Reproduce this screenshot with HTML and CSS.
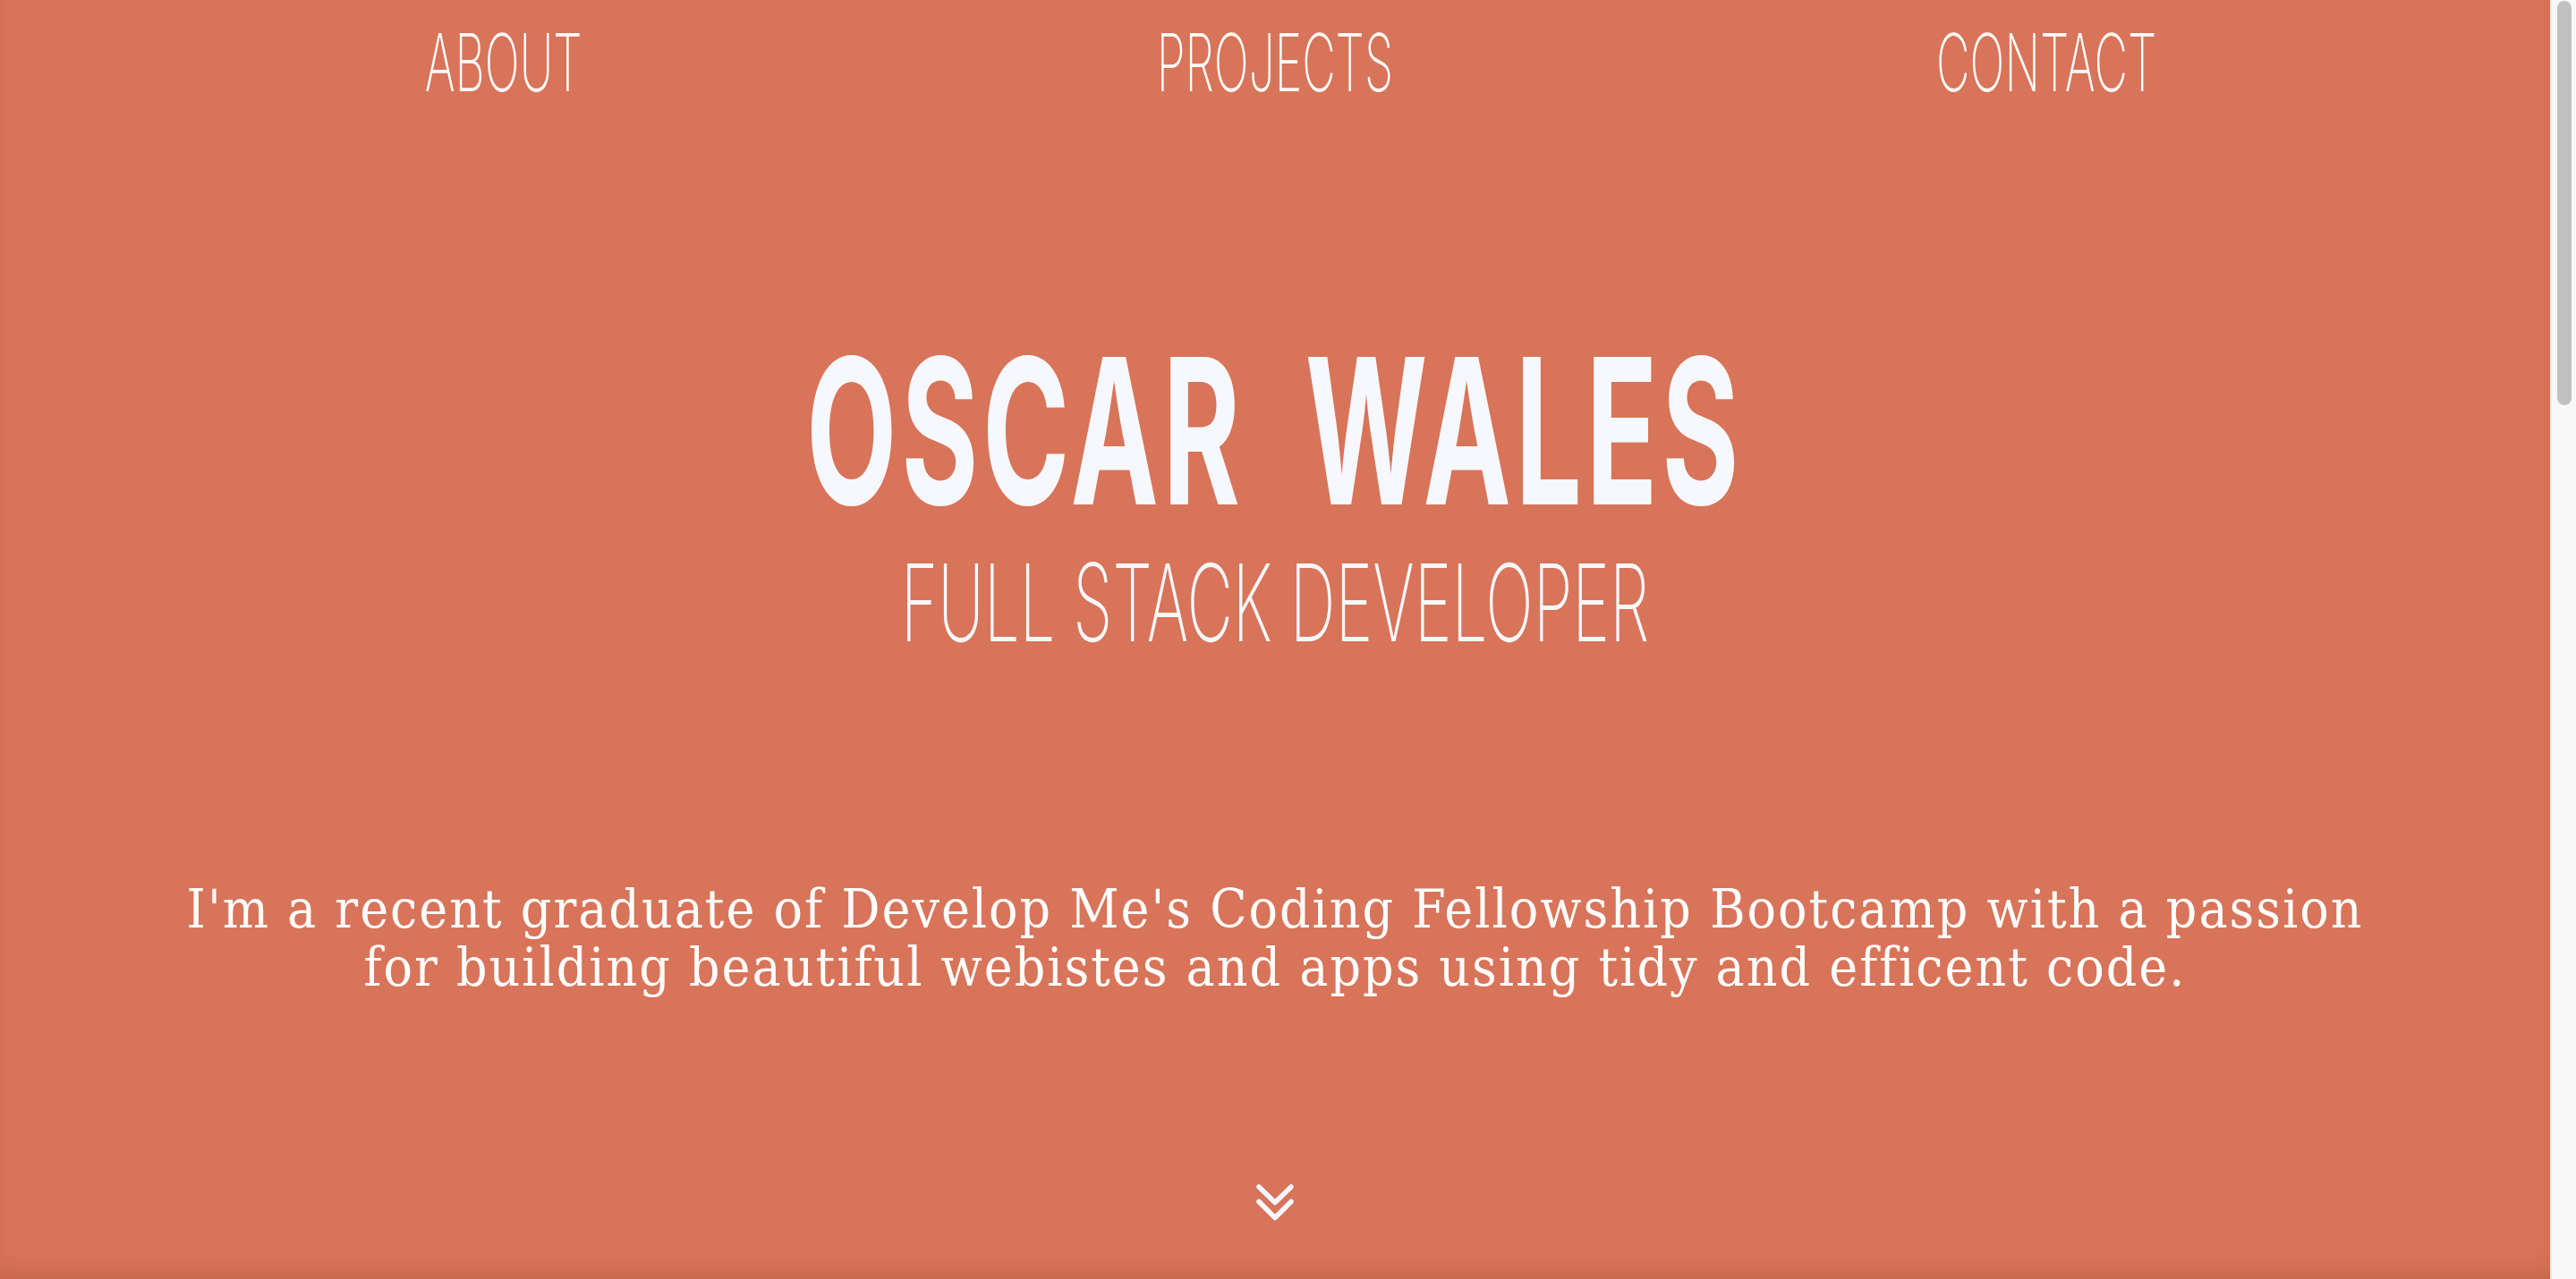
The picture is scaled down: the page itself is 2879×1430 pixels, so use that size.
FILE: index.html
```html
<!DOCTYPE html>
<html lang="en">
<head>
<meta charset="utf-8">
<title>Oscar Wales — Full Stack Developer</title>
<link rel="stylesheet" href="styles.css">
</head>
<body>
<div class="page">
  <main class="hero">
    <nav class="nav">
      <a class="nav-item" href="#about"><span class="squeeze">About</span></a>
      <a class="nav-item" href="#projects"><span class="squeeze">Projects</span></a>
      <a class="nav-item" href="#contact"><span class="squeeze">Contact</span></a>
    </nav>
    <header class="intro">
      <h1 class="name"><span class="squeeze">Oscar Wales</span></h1>
      <h2 class="role"><span class="squeeze">Full Stack Developer</span></h2>
    </header>
    <p class="bio">I'm a recent graduate of Develop Me's Coding Fellowship Bootcamp with a passion for building beautiful webistes and apps using tidy and efficent code.</p>
    <a class="scroll-down" href="#about" aria-label="Scroll down">
      <svg width="46" height="46" viewBox="0 0 46 46" fill="none" stroke="#f7f8fd" stroke-width="5.5" stroke-linecap="round" stroke-linejoin="round">
        <path d="M5 5 L23 22.5 L41 5"/>
        <path d="M5 21.5 L23 39.5 L41 21.5"/>
      </svg>
    </a>
  </main>
  <div class="scrollbar"><div class="scrollbar-thumb"></div></div>
</div>
</body>
</html>
```

FILE: styles.css
```css
* { box-sizing: border-box; }

html, body {
  margin: 0;
  padding: 0;
  height: 100%;
  overflow: hidden;
}

body {
  font-family: "Inter", "Roboto", "Liberation Sans", sans-serif;
  background: #f8f8f8;
}

.page {
  display: flex;
  height: 1430px;
}

.hero {
  flex: 1;
  display: flex;
  flex-direction: column;
  align-items: center;
  background: #d87459;
  box-shadow: inset 0 -18px 26px -14px rgba(120, 40, 20, 0.25);
}

.nav {
  width: 100%;
  display: flex;
  padding: 25px 132px 0;
}

.nav-item {
  flex: 1;
  text-align: center;
  color: #ffffff;
  text-decoration: none;
  text-transform: uppercase;
  font-size: 89px;
  font-weight: 200;
  line-height: 1;
}

.squeeze {
  display: inline-block;
  transform: scaleX(0.58);
  transform-origin: center;
  white-space: nowrap;
}

.intro {
  margin-top: 254px;
  text-align: center;
  color: #f7f8fd;
  text-transform: uppercase;
}

.name {
  margin: 0;
  font-size: 227px;
  font-weight: 700;
  line-height: 1;
  letter-spacing: 8px;
  word-spacing: 56px;
}

.name .squeeze {
  transform: scaleX(0.58);
}

.role {
  margin: 19px 0 0;
  font-size: 120px;
  font-weight: 200;
  line-height: 1;
}

.role .squeeze {
  transform: scaleX(0.59);
}

.bio {
  margin: 250px 0 0;
  padding: 0 175px;
  text-align: center;
  color: #ffffff;
  font-family: "DejaVu Serif Condensed", "DejaVu Serif", serif;
  font-stretch: condensed;
  font-size: 60px;
  line-height: 65px;
  letter-spacing: 2px;
}

.scroll-down {
  display: block;
  margin-top: 208px;
  width: 46px;
  height: 46px;
}

.scroll-down svg { display: block; }

.scrollbar {
  width: 29px;
  background: #f8f8f8;
  border-left: 2px solid #ececec;
  padding: 1px 5px 0 6px;
}

.scrollbar-thumb {
  height: 452px;
  background: #c1c1c1;
  border-radius: 8px;
}
```
